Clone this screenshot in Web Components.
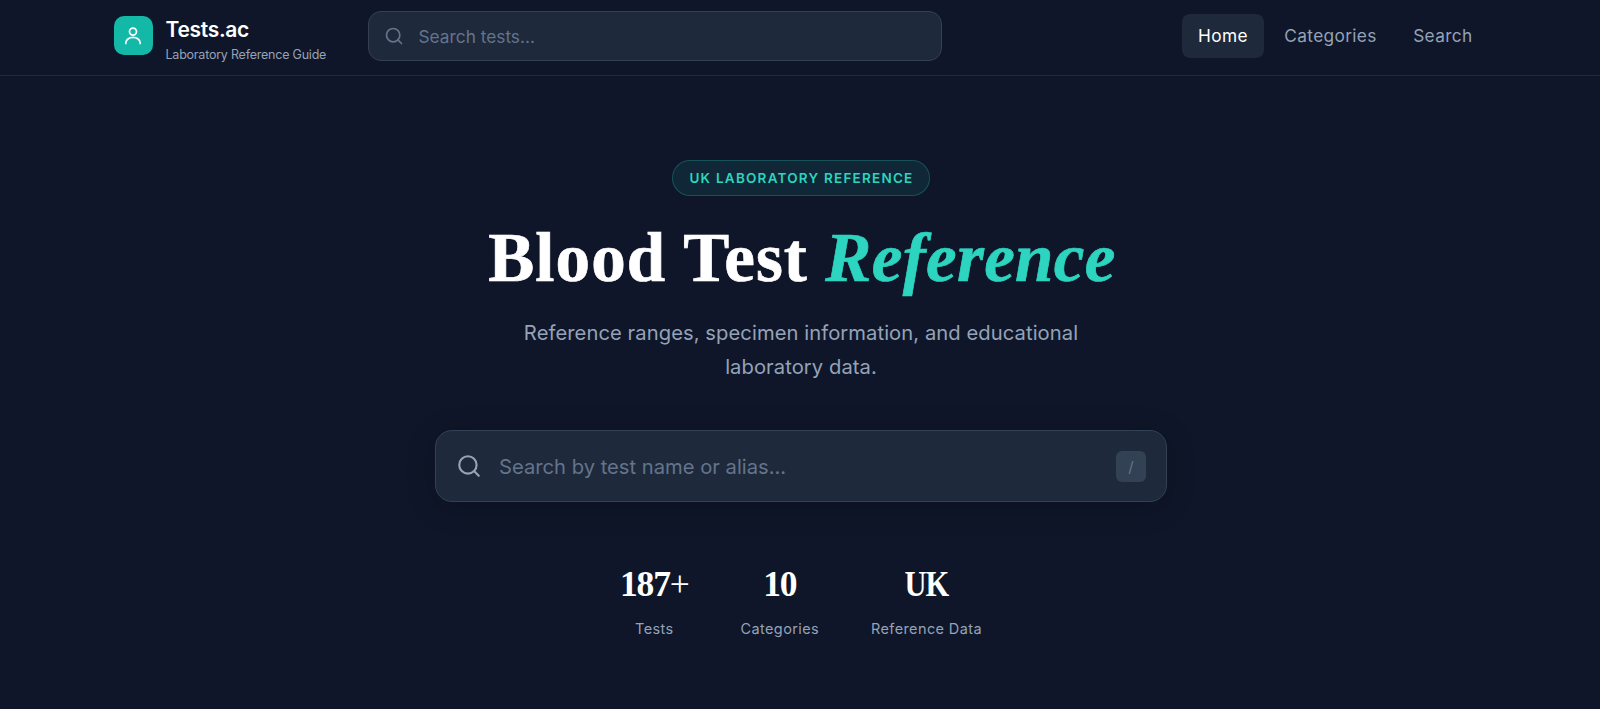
<!DOCTYPE html>
<html lang="en">
<head>
<meta charset="utf-8">
<title>Tests.ac - Laboratory Reference Guide</title>
<style>
  body {
    margin: 0;
    min-height: 100vh;
    background: #0f1629;
    color: #fff;
    font-family: Inter, "Liberation Sans", sans-serif;
    overflow: hidden;
  }
</style>
</head>
<body>
<site-header>
  <site-brand slot="brand" name="Tests.ac" tagline="Laboratory Reference Guide"></site-brand>
  <search-field slot="search" placeholder="Search tests..."></search-field>
  <nav-link active>Home</nav-link>
  <nav-link>Categories</nav-link>
  <nav-link>Search</nav-link>
</site-header>
<hero-section>
  <hero-badge slot="badge">UK LABORATORY REFERENCE</hero-badge>
  <hero-title slot="title" accent="Reference">Blood Test</hero-title>
  <span slot="lead">Reference ranges, specimen information, and educational<br>laboratory data.</span>
  <search-field slot="search" large placeholder="Search by test name or alias..." hotkey="/"></search-field>
  <stat-item value="187" suffix="+" label="Tests"></stat-item>
  <stat-item value="10" label="Categories"></stat-item>
  <stat-item class="narrow" value="UK" label="Reference Data"></stat-item>
</hero-section>

<script>
class SiteHeader extends HTMLElement {
  constructor() {
    super();
    this.attachShadow({ mode: 'open' });
    this.shadowRoot.innerHTML = `
      <style>
        :host {
          display: block;
          border-bottom: 1px solid #1e293b;
        }

        header {
          display: flex;
          align-items: flex-start;
          box-sizing: border-box;
          width: 1375px;
          height: 75px;
          margin: 0 auto;
          padding: 11px 0 0 1px;
        }

        .brand {
          width: 254px;
        }

        .search {
          width: 574px;
        }

        nav {
          display: flex;
          gap: 4.5px;
          margin: 2.5px -1px 0 auto;
        }
      </style>
      <header>
        <div class="brand"><slot name="brand"></slot></div>
        <div class="search"><slot name="search"></slot></div>
        <nav><slot></slot></nav>
      </header>
    `;
  }
}

class SiteBrand extends HTMLElement {
  constructor() {
    super();
    this.attachShadow({ mode: 'open' });
  }

  connectedCallback() {
    this.shadowRoot.innerHTML = `
      <style>
        :host {
          display: flex;
          gap: 13px;
          padding-top: 5px;
          white-space: nowrap;
        }

        .logo {
          display: flex;
          align-items: center;
          justify-content: center;
          width: 39px;
          height: 39px;
          border-radius: 10px;
          background: #14b8a6;
        }

        .name {
          font-size: 21px;
          font-weight: 600;
          line-height: 28px;
          letter-spacing: -0.3px;
        }

        .tagline {
          margin-top: 1px;
          color: #94a3b8;
          font-size: 12.5px;
          line-height: 20px;
          letter-spacing: -0.22px;
        }
      </style>
      <div class="logo">
        <svg width="20" height="20" viewBox="0 0 20 20" fill="none" stroke="#fff" stroke-width="1.7" stroke-linecap="round">
          <circle cx="10" cy="5.6" r="3.5"/>
          <path d="M2.8 17.4v-.6a7.2 5.4 0 0 1 14.4 0v.6"/>
        </svg>
      </div>
      <div>
        <div class="name">${this.getAttribute('name')}</div>
        <div class="tagline">${this.getAttribute('tagline')}</div>
      </div>
    `;
  }
}

class NavLink extends HTMLElement {
  constructor() {
    super();
    this.attachShadow({ mode: 'open' });
    this.shadowRoot.innerHTML = `
      <style>
        :host {
          display: block;
          padding: 0 16px;
          border-radius: 8px;
          color: #94a3b8;
          font-size: 17.3px;
          line-height: 44.5px;
          letter-spacing: 0.33px;
          cursor: pointer;
        }

        :host([active]) {
          background: #1e293b;
          color: #fff;
        }
      </style>
      <slot></slot>
    `;
  }
}

class SearchField extends HTMLElement {
  constructor() {
    super();
    this.attachShadow({ mode: 'open' });
  }

  connectedCallback() {
    const hotkey = this.getAttribute('hotkey');
    this.shadowRoot.innerHTML = `
      <style>
        :host {
          display: flex;
          align-items: center;
          box-sizing: border-box;
          height: 50px;
          padding: 0 15px;
          border: 1px solid #334155;
          border-radius: 13px;
          background: #1e293b;
          color: #64748b;
          font-size: 17.3px;
        }

        :host([large]) {
          height: 72px;
          padding: 0 20px;
          border-radius: 17px;
          box-shadow: 0 5px 30px rgba(0, 0, 0, 0.2);
          font-size: 20.2px;
        }

        svg {
          width: 20px;
          height: 20px;
          margin-right: 15px;
        }

        :host([large]) svg {
          width: 26px;
          height: 26px;
          margin-right: 17px;
          color: #94a3b8;
        }

        span {
          flex: 1;
        }

        kbd {
          width: 30px;
          border-radius: 6px;
          background: #334155;
          font-family: inherit;
          font-size: 15px;
          line-height: 31px;
          text-align: center;
        }
      </style>
      <svg viewBox="0 0 24 24" fill="none" stroke="currentColor" stroke-width="2" stroke-linecap="round">
        <circle cx="11" cy="11" r="8"/>
        <path d="m21 21-4.35-4.35"/>
      </svg>
      <span>${this.getAttribute('placeholder')}</span>
      ${hotkey ? `<kbd>${hotkey}</kbd>` : ''}
    `;
  }
}

class HeroSection extends HTMLElement {
  constructor() {
    super();
    this.attachShadow({ mode: 'open' });
    this.shadowRoot.innerHTML = `
      <style>
        :host {
          display: flex;
          flex-direction: column;
          align-items: center;
          padding: 84px 0 0 2px;
        }

        .lead {
          margin: 18px 0 46px;
          color: #94a3b8;
          font-size: 20.2px;
          line-height: 34px;
          letter-spacing: 0.07px;
          text-align: center;
        }

        .search {
          width: 732px;
        }

        .stats {
          display: flex;
          gap: 52px;
          margin-top: 60px;
        }
      </style>
      <slot name="badge"></slot>
      <slot name="title"></slot>
      <div class="lead"><slot name="lead"></slot></div>
      <div class="search"><slot name="search"></slot></div>
      <div class="stats"><slot></slot></div>
    `;
  }
}

class HeroBadge extends HTMLElement {
  constructor() {
    super();
    this.attachShadow({ mode: 'open' });
    this.shadowRoot.innerHTML = `
      <style>
        :host {
          display: block;
          padding: 0 15px 0 16px;
          border: 1px solid rgba(45, 212, 191, 0.25);
          border-radius: 18px;
          background: rgba(20, 184, 166, 0.11);
          color: #2dd4bf;
          font-size: 13.5px;
          font-weight: 600;
          line-height: 34px;
          letter-spacing: 1.23px;
        }
      </style>
      <slot></slot>
    `;
  }
}

class HeroTitle extends HTMLElement {
  constructor() {
    super();
    this.attachShadow({ mode: 'open' });
  }

  connectedCallback() {
    this.shadowRoot.innerHTML = `
      <style>
        :host {
          display: block;
          margin-top: 22px;
        }

        h1 {
          margin: 0 0 0 2px;
          font: bold 69px/80px "Liberation Serif", serif;
          letter-spacing: 1.1px;
          white-space: nowrap;
          -webkit-text-stroke: 0.7px;
        }

        em {
          margin-left: -1px;
          color: #2dd4bf;
          letter-spacing: 0.35px;
        }
      </style>
      <h1><slot></slot> <em>${this.getAttribute('accent')}</em></h1>
    `;
  }
}

class StatItem extends HTMLElement {
  constructor() {
    super();
    this.attachShadow({ mode: 'open' });
  }

  connectedCallback() {
    this.shadowRoot.innerHTML = `
      <style>
        :host {
          display: block;
          min-width: 68px;
          text-align: center;
        }

        .value {
          font: bold 35.5px/45px "Liberation Serif", serif;
          letter-spacing: -1.2px;
        }

        :host(.narrow) .value {
          transform: scaleX(0.86);
        }

        .suffix {
          font-weight: normal;
        }

        .label {
          margin-top: 11px;
          color: #94a3b8;
          font-size: 14.5px;
          line-height: 22px;
          letter-spacing: 0.38px;
        }
      </style>
      <div class="value">${this.getAttribute('value')}<span class="suffix">${this.getAttribute('suffix') ?? ''}</span></div>
      <div class="label">${this.getAttribute('label')}</div>
    `;
  }
}

customElements.define('site-header', SiteHeader);
customElements.define('site-brand', SiteBrand);
customElements.define('nav-link', NavLink);
customElements.define('search-field', SearchField);
customElements.define('hero-section', HeroSection);
customElements.define('hero-badge', HeroBadge);
customElements.define('hero-title', HeroTitle);
customElements.define('stat-item', StatItem);
</script>
</body>
</html>
